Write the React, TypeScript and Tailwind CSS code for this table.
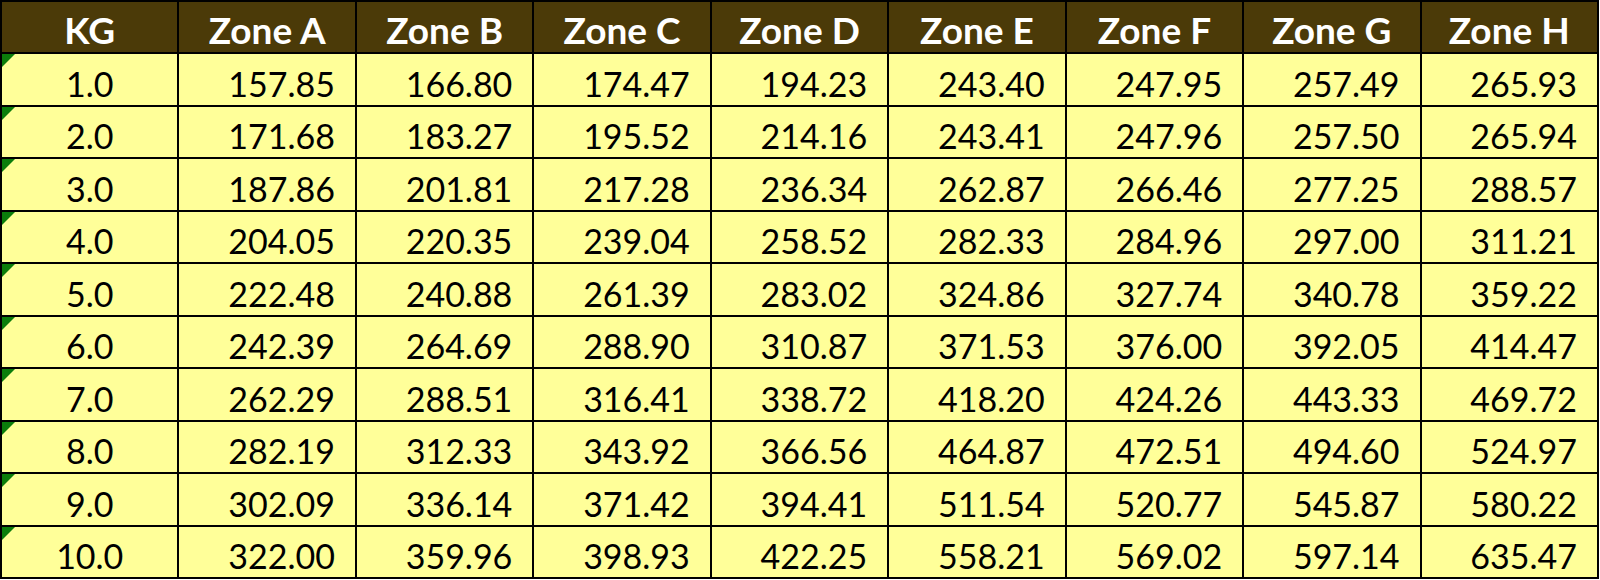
import React from 'react';

const zones = ['Zone A', 'Zone B', 'Zone C', 'Zone D', 'Zone E', 'Zone F', 'Zone G', 'Zone H'];

const rows: [string, string[]][] = [
  ['1.0', ['157.85', '166.80', '174.47', '194.23', '243.40', '247.95', '257.49', '265.93']],
  ['2.0', ['171.68', '183.27', '195.52', '214.16', '243.41', '247.96', '257.50', '265.94']],
  ['3.0', ['187.86', '201.81', '217.28', '236.34', '262.87', '266.46', '277.25', '288.57']],
  ['4.0', ['204.05', '220.35', '239.04', '258.52', '282.33', '284.96', '297.00', '311.21']],
  ['5.0', ['222.48', '240.88', '261.39', '283.02', '324.86', '327.74', '340.78', '359.22']],
  ['6.0', ['242.39', '264.69', '288.90', '310.87', '371.53', '376.00', '392.05', '414.47']],
  ['7.0', ['262.29', '288.51', '316.41', '338.72', '418.20', '424.26', '443.33', '469.72']],
  ['8.0', ['282.19', '312.33', '343.92', '366.56', '464.87', '472.51', '494.60', '524.97']],
  ['9.0', ['302.09', '336.14', '371.42', '394.41', '511.54', '520.77', '545.87', '580.22']],
  ['10.0', ['322.00', '359.96', '398.93', '422.25', '558.21', '569.02', '597.14', '635.47']],
];

const App = () => {
  return (
    <div className="bg-white w-[1600px] h-[580px]" style={{ fontFamily: 'Lato, "Open Sans", sans-serif' }}>
      <div className="grid grid-cols-9 gap-[2px] p-[2px] bg-black w-[1599px] grid-rows-[50px_repeat(10,50.5px)]">
        <div className="bg-[#4b3a08] text-white font-bold text-[37px] leading-[37px] flex items-end justify-center pb-[4px]">
          KG
        </div>
        {zones.map((z) => (
          <div
            key={z}
            className="bg-[#4b3a08] text-white font-bold text-[37px] leading-[37px] flex items-end justify-center pb-[4px]"
          >
            {z}
          </div>
        ))}
        {rows.map(([kg, vals]) => (
          <React.Fragment key={kg}>
            <div className="relative bg-[#ffff99] text-black text-[34px] leading-[34px] flex items-end justify-center pb-[4px]">
              <span className="absolute left-0 top-0 w-0 h-0 border-t-[13px] border-t-[#0b7d0b] border-r-[13px] border-r-transparent" />
              {kg}
            </div>
            {vals.map((v, i) => (
              <div
                key={i}
                className="bg-[#ffff99] text-black text-[34px] leading-[34px] flex items-end justify-end pr-[20px] pb-[4px]"
              >
                {v}
              </div>
            ))}
          </React.Fragment>
        ))}
      </div>
    </div>
  );
};

export default App;
